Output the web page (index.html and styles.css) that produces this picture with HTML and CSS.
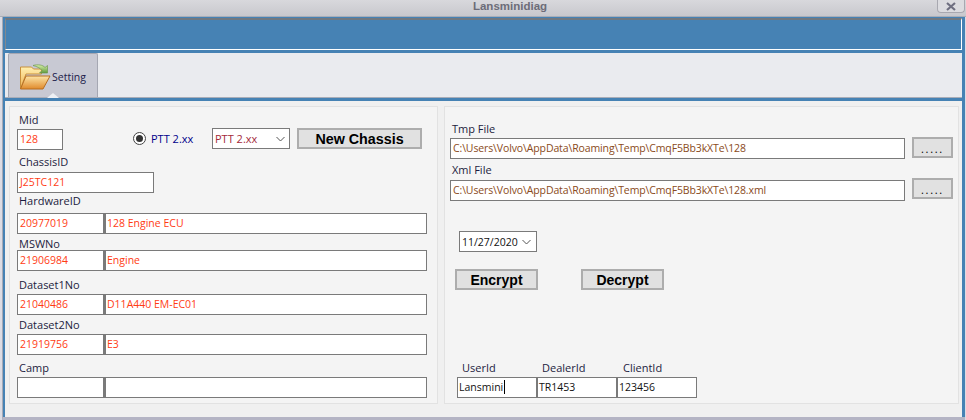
FILE: index.html
```html
<!DOCTYPE html>
<html lang="en">
<head>
<meta charset="utf-8">
<title>Lansminidiag</title>
<link rel="stylesheet" href="styles.css">
</head>
<body>
<div class="titlebar">
  <span class="title">Lansminidiag</span>
  <div class="close"><svg width="12" height="9" viewBox="0 0 12 9"><path d="M2 1l8 7M10 1L2 8" stroke="#6f6f80" stroke-width="2.2" fill="none"/></svg></div>
</div>
<div class="window">
  <div class="header"></div>
  <div class="ribbon">
    <div class="tab">
      <svg class="folder" width="31" height="26" viewBox="0 0 31 26">
        <defs>
          <linearGradient id="back" x1="0" y1="0" x2="0" y2="1"><stop offset="0" stop-color="#fff0b0"/><stop offset="1" stop-color="#f0b050"/></linearGradient>
          <linearGradient id="front" x1="0" y1="0" x2="0" y2="1"><stop offset="0" stop-color="#fde5a6"/><stop offset="1" stop-color="#e08a2c"/></linearGradient>
          <linearGradient id="arrow" x1="0" y1="0" x2="0" y2="1"><stop offset="0" stop-color="#d8f0a8"/><stop offset="1" stop-color="#5f9a3c"/></linearGradient>
        </defs>
        <path d="M.5 3h11l2 2h8v5H6L.5 25z" fill="url(#back)" stroke="#c8903c"/>
        <path d="M13 1.5c5-1.500 10-.5 12 2l2.500-2V9h-8l2.500-2.500c-2-2.500-5-4-9-5z" fill="url(#arrow)" stroke="#6f9a50" stroke-width=".7"/>
        <path d="M6 12h24l-7 13H.5z" fill="url(#front)" stroke="#b86e20"/>
      </svg>
      <span class="tab-label">Setting</span>
      <span class="notch"></span>
    </div>
  </div>
  <div class="content">
    <section class="panel left">
      <div class="label l-mid">Mid</div>
      <div class="row mid-row">
        <div class="field red w46">128</div>
        <div class="radio"><span class="radio-dot"></span></div>
        <span class="radio-label">PTT 2.xx</span>
        <div class="combo ptt"><span>PTT 2.xx</span><svg width="9" height="6" viewBox="0 0 9 6"><path d="M.5 1l4 4 4-4" stroke="#555" fill="none"/></svg></div>
        <button class="btn new">New Chassis</button>
      </div>
      <div class="label l-chassis">ChassisID</div>
      <div class="field red w137">J25TC121</div>
      <div class="label l-hw">HardwareID</div>
      <div class="row">
        <div class="field red w87">20977019</div>
        <div class="field red grow">128 Engine ECU</div>
      </div>
      <div class="label l-msw">MSWNo</div>
      <div class="row">
        <div class="field red w87">21906984</div>
        <div class="field red grow">Engine</div>
      </div>
      <div class="label l-d1">Dataset1No</div>
      <div class="row">
        <div class="field red w87">21040486</div>
        <div class="field red grow">D11A440 EM-EC01</div>
      </div>
      <div class="label l-d2">Dataset2No</div>
      <div class="row">
        <div class="field red w87">21919756</div>
        <div class="field red grow">E3</div>
      </div>
      <div class="label l-camp">Camp</div>
      <div class="row">
        <div class="field w87"></div>
        <div class="field grow"></div>
      </div>
    </section>
    <section class="panel right">
      <div class="label r-tmp">Tmp File</div>
      <div class="file-row">
        <div class="field brown path">C:\Users\Volvo\AppData\Roaming\Temp\CmqF5Bb3kXTe\128</div>
        <button class="btn dots up1">.....</button>
      </div>
      <div class="label r-xml">Xml File</div>
      <div class="file-row">
        <div class="field brown path">C:\Users\Volvo\AppData\Roaming\Temp\CmqF5Bb3kXTe\128.xml</div>
        <button class="btn dots up2">.....</button>
      </div>
      <div class="combo date"><span>11/27/2020</span><svg width="9" height="6" viewBox="0 0 9 6"><path d="M.5 1l4 4 4-4" stroke="#555" fill="none"/></svg></div>
      <div class="actions">
        <button class="btn action">Encrypt</button>
        <button class="btn action">Decrypt</button>
      </div>
      <div class="ids">
        <div class="id-col"><div class="id-label">UserId</div><div class="field dark">Lansmini<span class="caret"></span></div></div>
        <div class="id-col"><div class="id-label">DealerId</div><div class="field dark">TR1453</div></div>
        <div class="id-col"><div class="id-label">ClientId</div><div class="field dark">123456</div></div>
      </div>
    </section>
  </div>
</div>
</body>
</html>
```
FILE: styles.css
```css
* { box-sizing: border-box; }
html, body { margin: 0; padding: 0; }
body {
  width: 966px;
  height: 420px;
  overflow: hidden;
  background: #dcdce4;
  font-family: "Open Sans", "Liberation Sans", sans-serif;
  font-size: 11px;
  color: #1c1c40;
}
.titlebar {
  height: 17px;
  position: relative;
  text-align: center;
  background: linear-gradient(#d8d8dc, #c8c8cd);
  border-bottom: 1px solid #a9aeb8;
}
.title {
  display: block;
  padding-left: 54px;
  font: bold 11.5px/12px "Liberation Sans", sans-serif;
  color: #6c6c78;
}
.close {
  position: absolute;
  right: 1px;
  top: 0;
  width: 28px;
  height: 13px;
  display: flex;
  align-items: center;
  justify-content: center;
  background: #dcdce0;
  border: 1px solid #a8a8b0;
  border-top: 0;
  border-radius: 0 0 4px 4px;
}
.window {
  margin: 0 1px 0 2px;
  height: 403px;
  background: #4682b4;
  border-left: 1px solid #a6aab6;
  border-bottom: 3px solid #b4b4c4;
  padding: 1px 3px 0 2px;
  display: flex;
  flex-direction: column;
}
.header {
  flex: none;
  height: 32px;
  background: #4682b4;
  border-top: 2px solid #707880;
  border-left: 1px solid #808890;
  border-bottom: 1px solid #fff;
  border-right: 1px solid #fff;
}
.ribbon {
  flex: none;
  height: 45px;
  margin-top: 3px;
  padding-left: 3px;
  background: #eaebef;
  border-bottom: 1px solid #a9adb8;
}
.tab {
  position: relative;
  width: 90px;
  height: 44px;
  display: flex;
  align-items: center;
  padding: 3px 0 0 11px;
  background: #c8c9d3;
  border: 1px solid #a5a7b2;
  border-bottom: 0;
  border-radius: 2px 2px 0 0;
}
.folder { flex: none; margin-top: -1px; }
.tab-label { margin-left: 1px; font-size: 10.5px; color: #20204a; }
.notch {
  position: absolute;
  left: 38px;
  bottom: -1px;
  border: 6px solid transparent;
  border-top: 0;
  border-bottom: 5px solid #eef0f4;
}
.content {
  flex: none;
  margin-top: 3px;
  display: flex;
  gap: 6px;
  padding: 5px 3px 13px 4px;
  background: #f0f0f0;
}
.panel {
  flex: none;
  height: 298px;
  background: #f4f4f4;
  border: 1px solid #e2e2e2;
}
.left { width: 429px; padding: 0 10px 0 7px; }
.right { width: 515px; padding: 0 5px; }
.label { height: 15px; padding-left: 2px; line-height: 15px; white-space: nowrap; color: #1c1c40; }
.l-mid { margin-top: 5px; height: 17px; }
.l-chassis { margin-top: 4px; height: 18px; }
.l-hw { margin-top: 0; height: 20px; }
.l-msw { margin-top: 2px; height: 14px; }
.l-d1 { margin-top: 6px; height: 17px; }
.l-d2 { margin-top: 2px; height: 17px; }
.l-camp { margin-top: 5px; height: 17px; }
.row { display: flex; align-items: flex-start; }
.mid-row { height: 21px; }
.field {
  height: 21px;
  padding: 0 2px;
  background: #fff;
  border: 1px solid #7a7a7a;
  font-size: 10.5px;
  line-height: 19px;
  white-space: nowrap;
  overflow: hidden;
}
.red { color: #ff3c14; }
.brown { color: #8a4a20; letter-spacing: -.12px; }
.dark { color: #111; }
.w46 { width: 46px; }
.w87 { width: 87px; }
.w137 { width: 137px; }
.grow { flex: 1; border-left-width: 2px; padding-left: 1px; }
.radio {
  width: 13px;
  height: 13px;
  margin: 3px 0 0 70px;
  border: 1px solid #444;
  border-radius: 50%;
  background: #fff;
  display: flex;
  align-items: center;
  justify-content: center;
}
.radio-dot { width: 7px; height: 7px; border-radius: 50%; background: #333; }
.radio-label { margin: 2px 0 0 5px; width: 61px; color: #00008b; }
.combo {
  height: 21px;
  display: flex;
  align-items: center;
  justify-content: space-between;
  background: #fff;
  border: 1px solid #7a7a7a;
  padding: 0 4px 0 2px;
}
.ptt { width: 78px; margin-top: -1px; color: #a52a3a; }
.btn {
  padding: 1px 0 0;
  background: #e1e1e1;
  border: 2px solid #adadad;
  font-family: "Liberation Sans", sans-serif;
  font-weight: bold;
  color: #000;
}
.new { width: 125px; height: 21px; margin: -1px 0 0 7px; font-size: 14.3px; line-height: 16px; }
.r-tmp { margin-top: 14px; height: 17px; }
.r-xml { margin-top: 3px; height: 18px; }
.file-row { display: flex; align-items: flex-start; }
.path { width: 455px; }
.dots {
  width: 41px;
  height: 21px;
  margin-left: 7px;
  font: 11px/13px "Open Sans", sans-serif;
  letter-spacing: 1.7px;
  color: #000;
}
.up1 { margin-top: -1px; }
.up2 { margin-top: -2px; }
.date { width: 78px; margin: 30px 0 0 9px; color: #111; font-size: 10.5px; padding-right: 5px; }
.actions { display: flex; gap: 43px; margin: 17px 0 0 5px; }
.action { width: 83px; height: 21px; font-size: 14px; line-height: 16px; }
.ids { display: flex; margin: 69px 0 0 7px; }
.id-col { width: 80px; }
.id-label { height: 18px; padding-left: 5px; line-height: 18px; }
.id-col:nth-child(3) .id-label { padding-left: 6px; }
.id-col .field { padding: 0 1px; }
.caret { display: inline-block; width: 1px; height: 14px; margin-left: 1px; background: #000; vertical-align: -3px; }
```
